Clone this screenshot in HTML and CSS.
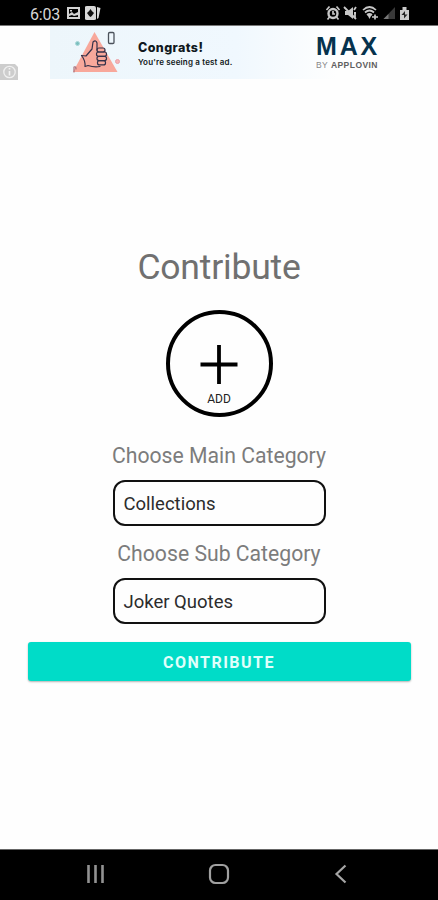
FILE: index.html
```html
<!DOCTYPE html>
<html lang="en">
<head>
<meta charset="utf-8">
<title>Contribute</title>
<link rel="stylesheet" href="styles.css">
</head>
<body>
<div class="screen">
  <header class="status">
    <div class="status-left">
      <span class="clock">6:03</span>
      <svg width="36" height="16" viewBox="0 0 36 16">
        <path fill="#d2d2d2" fill-rule="evenodd" d="M1 2h13v12H1zM3 4v5l3-2 2 2 4-2V4zM3 11v1h9v-2l-4 1-2-1z"/>
        <rect x="4" y="5" width="2" height="1.500" fill="#d2d2d2"/>
        <path fill="#d8d8d8" d="M21 1h7q2 0 2 2v11q0 1-2 1h-7q-2 0-2-1V2q0-1 2-1zM31 2l3.500 1-2 10-1.500 1z"/>
        <path fill="#111" d="M24.500 4q1 2 3.500 4-2 3-3.500 4-1.500-1-3.500-4 2.500-2 3.500-4z"/>
      </svg>
    </div>
    <svg class="status-right" width="86" height="16" viewBox="0 0 86 16">
      <g fill="none" stroke="#c8c8c8" stroke-width="1.700">
        <circle cx="8" cy="8.500" r="4.500" stroke-width="2.400"/><path d="M1.500 5l3-3.500M11.500 1.500l3 3.500M4.500 12l-2 2.500M11.500 12l2 2.500M8 6v3h2"/>
        <path d="M38 5q6.500-6 13 0M40 7.500q4.500-4 9 0M42 10q2.500-2 5 0"/>
        <path d="M47 12h6M50 9.500v5"/>
      </g>
      <path fill="#c8c8c8" d="M20 6h3l5-4v12l-5-4h-3zM42.500 10h4l-2 4z"/>
      <path stroke="#c8c8c8" stroke-width="1.800" fill="none" d="M19 2l12 12M29 5l2-3M29 8h2M30 9v4"/>
      <path fill="#393939" d="M58.500 14L70 2v12z"/><path fill="#777" d="M58.500 14l5-5v5z"/>
      <path fill="#cacaca" d="M75 5h2.500V2h4v3H84v10h-9z"/>
      <path fill="#222" d="M80 6l-3.500 4H79v3.500l3.500-4H80z"/>
    </svg>
  </header>

  <section class="ad-row">
    <div class="ad-info">
      <svg width="18" height="16" viewBox="0 0 18 16"><path d="M0 0h15l3 3v13H0z" fill="#cdcdcd"/><circle cx="9.500" cy="8" r="5.700" fill="none" stroke="#f0f0f0" stroke-width="1.300"/><path d="M9.500 7v4.500M9.500 4v1.500" fill="none" stroke="#f4f4f4" stroke-width="1.600"/></svg>
    </div>
    <div class="ad">
      <svg class="ad-art" width="54" height="53" viewBox="0 0 54 53">
        <path fill="#f8a89b" d="M22.500 6L45.500 46H1z"/>
        <g fill="none" stroke="#35324a" stroke-width="1.200" stroke-linejoin="round" stroke-linecap="round">
          <path d="M9.500 29.500l4.500.5 6-7 1-7q3-2.500 4 1v7"/>
          <path d="M9.500 29.500q4 5 3.500 11l3-1q6 2 12 1"/>
          <rect x="25" y="22" width="8" height="4" rx="2"/><rect x="24.500" y="26" width="10" height="4.300" rx="2"/><rect x="25" y="30.300" width="9.500" height="4.300" rx="2"/><rect x="25.500" y="34.600" width="8" height="4.300" rx="2"/>
          <path d="M2 46v-5q2-1 2 2" stroke="#a8707a"/>
        </g>
        <rect x="36.500" y="6.500" width="5.500" height="11" rx="1.200" fill="none" stroke="#4b525b" stroke-width="1.300"/>
        <circle cx="5.500" cy="17.500" r="2" fill="#7bbfbf" stroke="#a8d8d8"/>
        <circle cx="45.500" cy="35.500" r="2" fill="#f5b5b5" stroke="#eaa0a8"/>
      </svg>
      <div class="ad-copy">
        <div class="ad-title">Congrats!</div>
        <div class="ad-sub">You're seeing a test ad.</div>
      </div>
      <div class="ad-brand">
        <div class="brand-name">MAX</div>
        <div class="brand-by">BY <b>APPLOVIN</b></div>
      </div>
    </div>
  </section>

  <main class="content">
    <h1 class="title">Contribute</h1>
    <div class="add">
      <svg width="38" height="39" viewBox="0 0 38 39"><path d="M19 0v39M.5 19.500h37" stroke="#000" stroke-width="3.800"/></svg>
      <span class="add-label">ADD</span>
    </div>
    <div class="label label-main">Choose Main Category</div>
    <div class="field">Collections</div>
    <div class="label label-sub">Choose Sub Category</div>
    <div class="field">Joker Quotes</div>
    <button class="submit">CONTRIBUTE</button>
  </main>

  <nav class="navbar">
    <svg width="22" height="22" viewBox="0 0 22 22"><path d="M3.500 2v18M10.500 2v18M17.500 2v18" stroke="#929292" stroke-width="2.600"/></svg>
    <svg width="22" height="22" viewBox="0 0 22 22"><rect x="2" y="2" width="18" height="18" rx="5.500" fill="none" stroke="#a0a0a0" stroke-width="2.200"/></svg>
    <svg width="22" height="22" viewBox="0 0 22 22"><path d="M15.500 2.500L6.500 11l9 8.500" fill="none" stroke="#a6a6a6" stroke-width="2.200"/></svg>
  </nav>
</div>
</body>
</html>
```
FILE: styles.css
```css
* { box-sizing: border-box; }
body { margin: 0; background: #fefefe; font-family: Roboto, sans-serif; }
svg { display: block; flex: none; }
.screen { width: 438px; height: 900px; display: flex; flex-direction: column; overflow: hidden; }
.status { height: 26px; flex: none; background: #000; border-bottom: 1px solid #777; display: flex; justify-content: space-between; padding: 1px 27px 0 30px; align-items: center; }
.status-left { display: flex; align-items: center; gap: 6px; }
.clock { color: #d6d6d6; font-size: 16px; line-height: 20px; letter-spacing: -0.2px; padding-top: 3px; }
.ad-row { height: 53px; flex: none; display: flex; }
.ad-info { width: 50px; padding-top: 38px; }
.ad { width: 338px; display: flex; background: linear-gradient(90deg, #edf6fb 0%, #f0f8fe 55%, #fefefe 85%); }
.ad-art { margin-left: 22px; }
.ad-copy { width: 166px; padding: 14px 0 0 12px; color: #101820; font-family: Inter, sans-serif; white-space: nowrap; }
.ad-title { font-size: 12.5px; font-weight: 800; line-height: 16px; letter-spacing: 0.4px; }
.ad-sub { font-size: 8px; font-weight: 600; line-height: 12px; letter-spacing: 0.17px; }
.ad-brand { padding: 7px 0 0 24px; white-space: nowrap; font-family: "Liberation Sans", sans-serif; }
.brand-name { color: #06324d; font-size: 25px; font-weight: 700; line-height: 27px; letter-spacing: 2.8px; }
.brand-by { color: #888; font-size: 8.5px; line-height: 10px; letter-spacing: 0.45px; }
.brand-by b { color: #606060; font-weight: 700; }
.content { flex: 1; display: flex; flex-direction: column; align-items: center; padding-top: 167px; }
.title { margin: 0; height: 42px; font-size: 35.5px; line-height: 42px; font-weight: 400; letter-spacing: -0.2px; color: #707070; }
.add { width: 107px; height: 107px; margin-top: 22px; border: 4px solid #000; border-radius: 50%; display: flex; flex-direction: column; align-items: center; padding-top: 31px; }
.add-label { font-size: 12px; line-height: 14px; margin-top: 8px; color: #222; }
.label { height: 26px; font-size: 21.2px; line-height: 28px; color: #7c7c7c; white-space: nowrap; }
.label-main { margin-top: 25px; }
.label-sub { margin-top: 14px; }
.field { width: 213px; height: 46px; margin-top: 12px; padding: 1px 0 0 9px; border: 2px solid #111; border-radius: 12px; font-size: 18.500px; line-height: 42px; color: #2c2c2c; }
.submit { width: 383px; height: 39px; margin-top: 18px; padding: 2px 0 0; border: 0; border-radius: 3px; background: #00dcc8; box-shadow: 0 1px 2px rgba(0,0,0,.3); color: #e0fffb; font: 700 16px/37px Roboto, sans-serif; letter-spacing: 1.5px; }
.navbar { height: 51px; flex: none; background: #000; border-top: 1px solid #666; display: flex; justify-content: space-between; padding: 13px 86px 0 85px; }
```
